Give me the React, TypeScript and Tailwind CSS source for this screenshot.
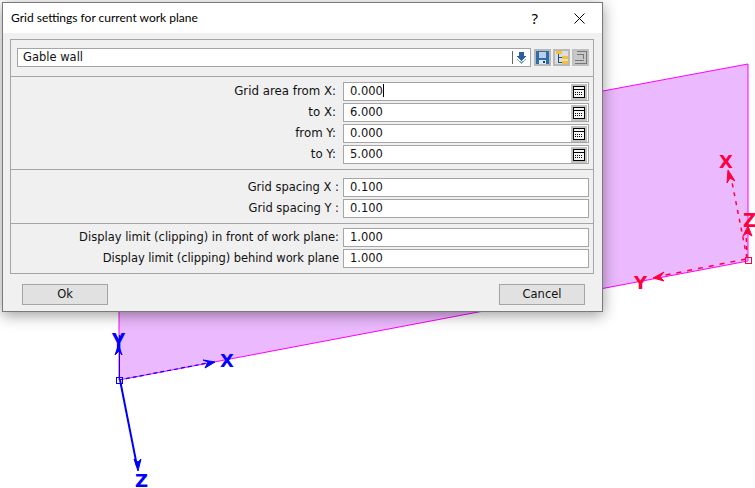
import React from "react";

const body = "font-['DejaVu_Sans',sans-serif] text-[11.5px] text-[#111]";

function Calc() {
  return (
    <div className="mr-px flex h-[16px] w-[16px] shrink-0 items-center justify-center border-2 border-[#c2c2c2] bg-white">
      <svg width="12" height="12" viewBox="0 0 12 12" shapeRendering="crispEdges">
        <rect x="0.5" y="0.5" width="11" height="11" fill="#f4f4f4" stroke="#000" />
        <rect x="1" y="3" width="10" height="1" fill="#000" />
        {[2, 4, 6, 8].map((x) => (
          <React.Fragment key={x}>
            <rect x={x} y={6} width="1" height="1" fill="#000" />
            <rect x={x} y={8} width="1" height="1" fill="#000" />
          </React.Fragment>
        ))}
      </svg>
    </div>
  );
}

function ToolButton({ children, muted }: { children: React.ReactNode; muted?: boolean }) {
  return (
    <div className={`flex h-[17px] w-[17px] shrink-0 items-center justify-center border-2 ${muted ? "border-[#c0c0c0] bg-[#c8c8c8]" : "border-[#b8b8b8] bg-[#dedede]"}`}>
      {children}
    </div>
  );
}

function Row({
  label,
  value,
  calc,
  caret,
  labelClass = "",
}: {
  label: string;
  value: string;
  calc?: boolean;
  caret?: boolean;
  labelClass?: string;
}) {
  return (
    <div className="flex h-[21px] items-center gap-[4px]">
      <div className={`flex-1 text-right whitespace-nowrap ${labelClass}`}>{label}</div>
      <div className="flex h-[19px] w-[246px] items-center justify-between border border-[#a5a5a5] bg-white pl-[6px]">
        <span className="relative">
          {value}
          {caret && <span className="absolute right-[-1px] top-[1px] h-[13px] w-px bg-black" />}
        </span>
        {calc && <Calc />}
      </div>
    </div>
  );
}

function Canvas() {
  const red = "#ff0040";
  const blue = "#0000ff";
  return (
    <svg className="absolute left-0 top-0" width="755" height="488" viewBox="0 0 755 488">
      <polygon points="119,181 748,64 748,261 119,380" fill="#ebb9fd" stroke="#ff00ff" strokeWidth="1" />
      <g stroke={blue} fill="none">
        <path d="M119.5 380 L119.5 335" strokeWidth="1" />
        <path d="M115 355 L118.5 345 L122 355 L119 351 Z" fill={blue} strokeWidth="1" />
        <path d="M119 380 L213 362" strokeWidth="1.2" strokeDasharray="4 3" />
        <path d="M203 360 L215 362 L205 368 L208 362 Z" fill={blue} />
        <path d="M120 380 L137 466" strokeWidth="2" />
        <path d="M134 459 L138 471 L141 459 L138 462 Z" fill={blue} strokeWidth="1" />
        <rect x="116.5" y="377.5" width="6" height="6" fill="none" shapeRendering="crispEdges" />
      </g>
      <g fill={blue} fontFamily="'DejaVu Sans', sans-serif" fontWeight="700" fontSize="18">
        <text x="220" y="367">X</text>
        <text transform="translate(112 350) scale(1 1.3)">Y</text>
        <text x="135" y="487">Z</text>
      </g>
      <g stroke={red} fill="none">
        <path d="M747 258 L730 172" strokeWidth="1.5" strokeDasharray="4 5" />
        <path d="M727 183 L728 170 L735 181 L730 178 Z" fill={red} strokeWidth="1" />
        <path d="M747 258 L746 228" strokeWidth="1.5" strokeDasharray="4 4" />
        <path d="M743 236 L748 226 L752 236 L747 233 Z" fill={red} strokeWidth="1" />
        <path d="M746 259 L656 277" strokeWidth="1.5" strokeDasharray="5 6" />
        <path d="M664 272 L653 278 L664 281 L660 277 Z" fill={red} strokeWidth="1" />
        <rect x="745.5" y="257.5" width="6" height="6" shapeRendering="crispEdges" />
      </g>
      <g fill={red} fontFamily="'DejaVu Sans', sans-serif" fontWeight="700" fontSize="18">
        <text x="719" y="168">X</text>
        <text transform="translate(743 227) scale(1 1.1)">Z</text>
        <text x="634" y="289">Y</text>
      </g>
    </svg>
  );
}

export default function App() {
  return (
    <div className="relative h-[488px] w-[755px] overflow-hidden bg-white">
      <Canvas />
      <div className={`absolute left-[2px] top-[2px] flex h-[310px] w-[601px] flex-col border border-[#7a7a7a] bg-[#f0f0f0] shadow-[0_3px_14px_rgba(0,0,0,0.4)] ${body}`}>
        <div className="flex h-[30px] shrink-0 items-center bg-white pl-[8px] font-['Lato',sans-serif] text-[12px] text-black">
          <span className="flex-1">Grid settings for current work plane</span>
          <span className="mr-[36px] font-['Noto_Sans',sans-serif] text-[15px] leading-none">?</span>
          <svg className="mr-[17px]" width="11" height="11" viewBox="0 0 11 11" stroke="#000">
            <path d="M0.5 0.5 L10.5 10.5 M10.5 0.5 L0.5 10.5" />
          </svg>
        </div>
        <div className="ml-[7px] mr-[8px] mt-[6px] border border-[#a5a5a5]">
          <div className="flex h-[37px] items-start gap-[2px] border-b border-[#a5a5a5] pl-[6px] pt-[8px]">
            <div className="mr-px flex h-[19px] w-[514px] items-center border border-[#a5a5a5] bg-white pl-[5px]">
              <span className="flex-1">Gable wall</span>
              <div className="h-[13px] w-px bg-[#666]" />
              <svg className="mx-[2px]" width="13" height="13" viewBox="0 0 13 13" shapeRendering="crispEdges">
                <path d="M4 1 H9 V5 H12 L6.5 10 L1 5 H4 Z" fill="#2b5f9e" />
                <path d="M2 8 L6.5 12 L11 8" fill="none" stroke="#7aa2d0" />
              </svg>
            </div>
            <div className="mt-px flex gap-[2px]">
              <ToolButton>
                <svg width="13" height="13" viewBox="0 0 13 13" shapeRendering="crispEdges">
                  <rect x="0" y="0" width="13" height="13" fill="#2f6ca8" />
                  <rect x="3" y="1" width="7" height="6" fill="#b9d0e6" />
                  <rect x="3" y="9" width="7" height="4" fill="#dfe9f3" />
                  <rect x="7" y="10" width="2" height="2" fill="#14406e" />
                </svg>
              </ToolButton>
              <ToolButton>
                <svg width="13" height="13" viewBox="0 0 13 13" shapeRendering="crispEdges">
                  <path d="M3.5 2 V11.5 H7 M3.5 6.5 H7" fill="none" stroke="#1d4f86" />
                  <rect x="1" y="0" width="6" height="3" fill="#f2c230" />
                  <rect x="7" y="5" width="6" height="3" fill="#f2c230" />
                  <rect x="7" y="10" width="6" height="3" fill="#f2c230" />
                </svg>
              </ToolButton>
              <ToolButton muted>
                <svg width="13" height="13" viewBox="0 0 13 13" shapeRendering="crispEdges" fill="none" stroke="#777">
                  <path d="M2.5 0.5 H12.5 V12.5 H7" />
                  <path d="M2.5 3.5 H9.5 V7.5" />
                  <path d="M0.5 9.5 H6.5 M0.5 12.5 H6.5 M6.5 9.5 H10" />
                </svg>
              </ToolButton>
            </div>
          </div>
          <div className="flex flex-col border-b border-[#a5a5a5] pb-[4px] pr-[4px] pt-[4px]">
            <Row label="Grid area from X:" value="0.000" calc caret labelClass="pr-[3px] text-[11.8px]" />
            <Row label="to X:" value="6.000" calc labelClass="pr-[3px] text-[11.8px]" />
            <Row label="from Y:" value="0.000" calc labelClass="pr-[3px] text-[11.8px]" />
            <Row label="to Y:" value="5.000" calc labelClass="pr-[3px] text-[11.8px]" />
          </div>
          <div className="flex flex-col border-b border-[#a5a5a5] pb-[4px] pr-[4px] pt-[7px]">
            <Row label="Grid spacing X :" value="0.100" />
            <Row label="Grid spacing Y :" value="0.100" />
          </div>
          <div className="flex flex-col pb-[4px] pr-[4px] pt-[3px]">
            <Row label="Display limit (clipping) in front of work plane:" value="1.000" />
            <Row label="Display limit (clipping) behind work plane" value="1.000" labelClass="tracking-[-0.07px]" />
          </div>
        </div>
        <div className="flex justify-between pl-[19px] pr-[17px] pt-[10px]">
          <div className="flex h-[21px] w-[86px] items-center justify-center border border-[#a5a5a5] bg-[#e1e1e1] pt-px">Ok</div>
          <div className="flex h-[21px] w-[86px] items-center justify-center border border-[#a5a5a5] bg-[#e1e1e1] pt-px">Cancel</div>
        </div>
      </div>
    </div>
  );
}
